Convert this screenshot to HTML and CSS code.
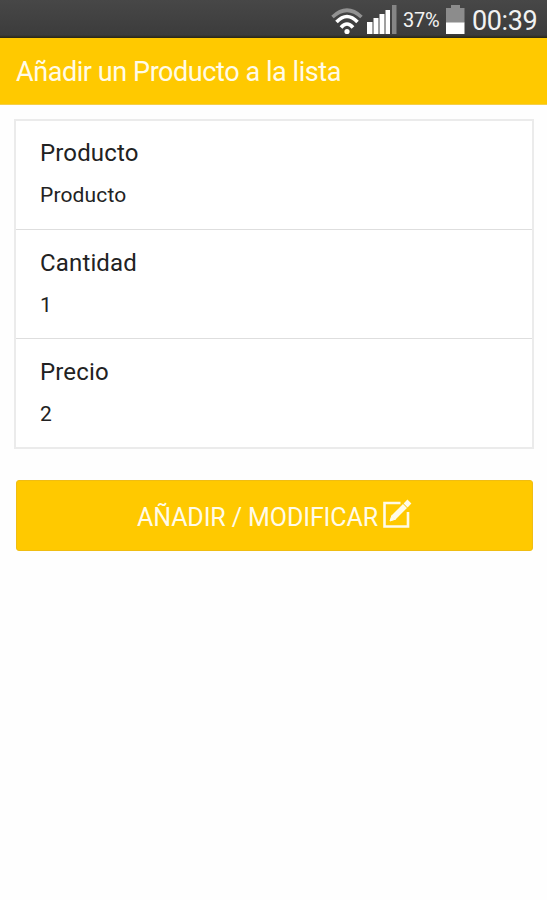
FILE: index.html
```html
<!DOCTYPE html>
<html lang="es">
<head>
    <meta charset="UTF-8">
    <meta name="viewport" content="width=device-width, initial-scale=1.0">
    <title>Añadir un Producto a la lista</title>
    <link rel="stylesheet" href="styles.css">
</head>
<body>
    <div class="status-bar">
        <svg class="wifi" width="32" height="27" viewBox="0 0 32 27" fill="none" stroke="#fff" stroke-width="3.6">
            <path d="M1.5 9Q16 -4.5 30.5 9" stroke="#929292"/>
            <path d="M5.5 14Q16 3 26.5 14"/>
            <path d="M10 19.5Q16 12.5 22 19.5"/>
            <circle cx="16" cy="23.5" r="2.6" fill="#fff" stroke="none"/>
        </svg>
        <svg class="signal" width="30" height="30" viewBox="0 0 30 30">
            <path d="M0 17h5v12H0zM6.5 13h4.5v16H6.5zM12.5 9h4.5v20h-4.5zM18.5 5h4.5v24h-4.5z" fill="#fff"/>
            <path d="M5 17h1.5v12H5zM11 13h1.5v16H11zM17 9h1.5v20H17z" fill="#a0a0a0"/>
            <path d="M25 0h4.5v29H25z" fill="#858585"/>
        </svg>
        <span class="percent">37%</span>
        <svg class="battery" width="19" height="29" viewBox="0 0 19 29">
            <path d="M5 0h9v3h4.5v15H0V3h5z" fill="#8c8c8c"/>
            <path d="M0 17.5h18.5V29H0z" fill="#fff"/>
        </svg>
        <span class="clock">00:39</span>
    </div>

    <header>
        <h1>Añadir un Producto a la lista</h1>
    </header>

    <form>
        <div class="list">
            <div class="item">
                <label>Producto</label>
                <span class="value">Producto</span>
            </div>
            <div class="item">
                <label>Cantidad</label>
                <span class="value">1</span>
            </div>
            <div class="item">
                <label>Precio</label>
                <span class="value">2</span>
            </div>
        </div>
        <button type="button">
            <span>AÑADIR / MODIFICAR</span>
            <svg width="30" height="30" viewBox="0 0 30 30" fill="none" stroke="#fffbe8">
                <path d="M18.5 4H2.5V27.5H26V13" stroke-width="2.6"/>
                <path d="M11.5 18.5L23 7" stroke-width="5.6"/>
                <path d="M8 22L9.8 16.5L13.5 20.2z" fill="#fffbe8" stroke-width="1"/>
                <path d="M23.6 6.4L27.4 2.6" stroke-width="5.6"/>
            </svg>
        </button>
    </form>
</body>
</html>
```

FILE: styles.css
```css
* {
    box-sizing: border-box;
}
body {
    margin: 0;
    background: #fefefe;
    font-family: Roboto, 'Liberation Sans', sans-serif;
    color: #222;
}
.status-bar {
    display: flex;
    justify-content: flex-end;
    height: 38px;
    padding-right: 10px;
    background: linear-gradient(#474747, #3c3c3c 92%, #292512);
    color: #f2f2f2;
}
.wifi {
    margin: 8px 4px 0 0;
}
.signal {
    margin: 5px 6px 0 0;
}
.percent {
    width: 43px;
    font-size: 20px;
    line-height: 41px;
    letter-spacing: -0.2px;
}
.battery {
    margin: 5px 7px 0 0;
}
.clock {
    width: 65px;
    font-size: 27px;
    line-height: 42px;
    letter-spacing: -0.4px;
    white-space: nowrap;
}
header {
    height: 67px;
    padding: 0 16px;
    background: #ffc900;
    border-bottom: 1px solid #f5cf4a;
}
h1 {
    margin: 0;
    font-size: 27px;
    font-weight: 400;
    line-height: 69px;
    letter-spacing: -0.43px;
    color: #fffbe8;
}
form {
    padding: 14px 13px 0 14px;
}
.list {
    border: 2px solid #ebebeb;
    background: #fff;
}
.item {
    display: flex;
    flex-direction: column;
    height: 109px;
    padding: 17px 24px 0;
}
.item:first-child {
    height: 108px;
    padding-top: 16px;
}
.item + .item {
    border-top: 1px solid #dedede;
}
label {
    font-size: 24px;
    line-height: 32px;
    letter-spacing: 0.15px;
}
.value {
    margin-top: 12px;
    font-size: 21px;
    line-height: 28px;
    letter-spacing: 0.15px;
}
button {
    display: flex;
    align-items: center;
    justify-content: center;
    width: 517px;
    height: 71px;
    margin: 31px 0 0 2px;
    padding: 0;
    border: 1px solid #f0bd12;
    border-radius: 3px;
    background: #ffc900;
    color: #fffbe8;
    font-family: inherit;
    font-size: 25px;
    letter-spacing: -0.1px;
}
button span {
    margin-top: 3px;
}
button svg {
    margin: -4px 0 0 4px;
}
```
